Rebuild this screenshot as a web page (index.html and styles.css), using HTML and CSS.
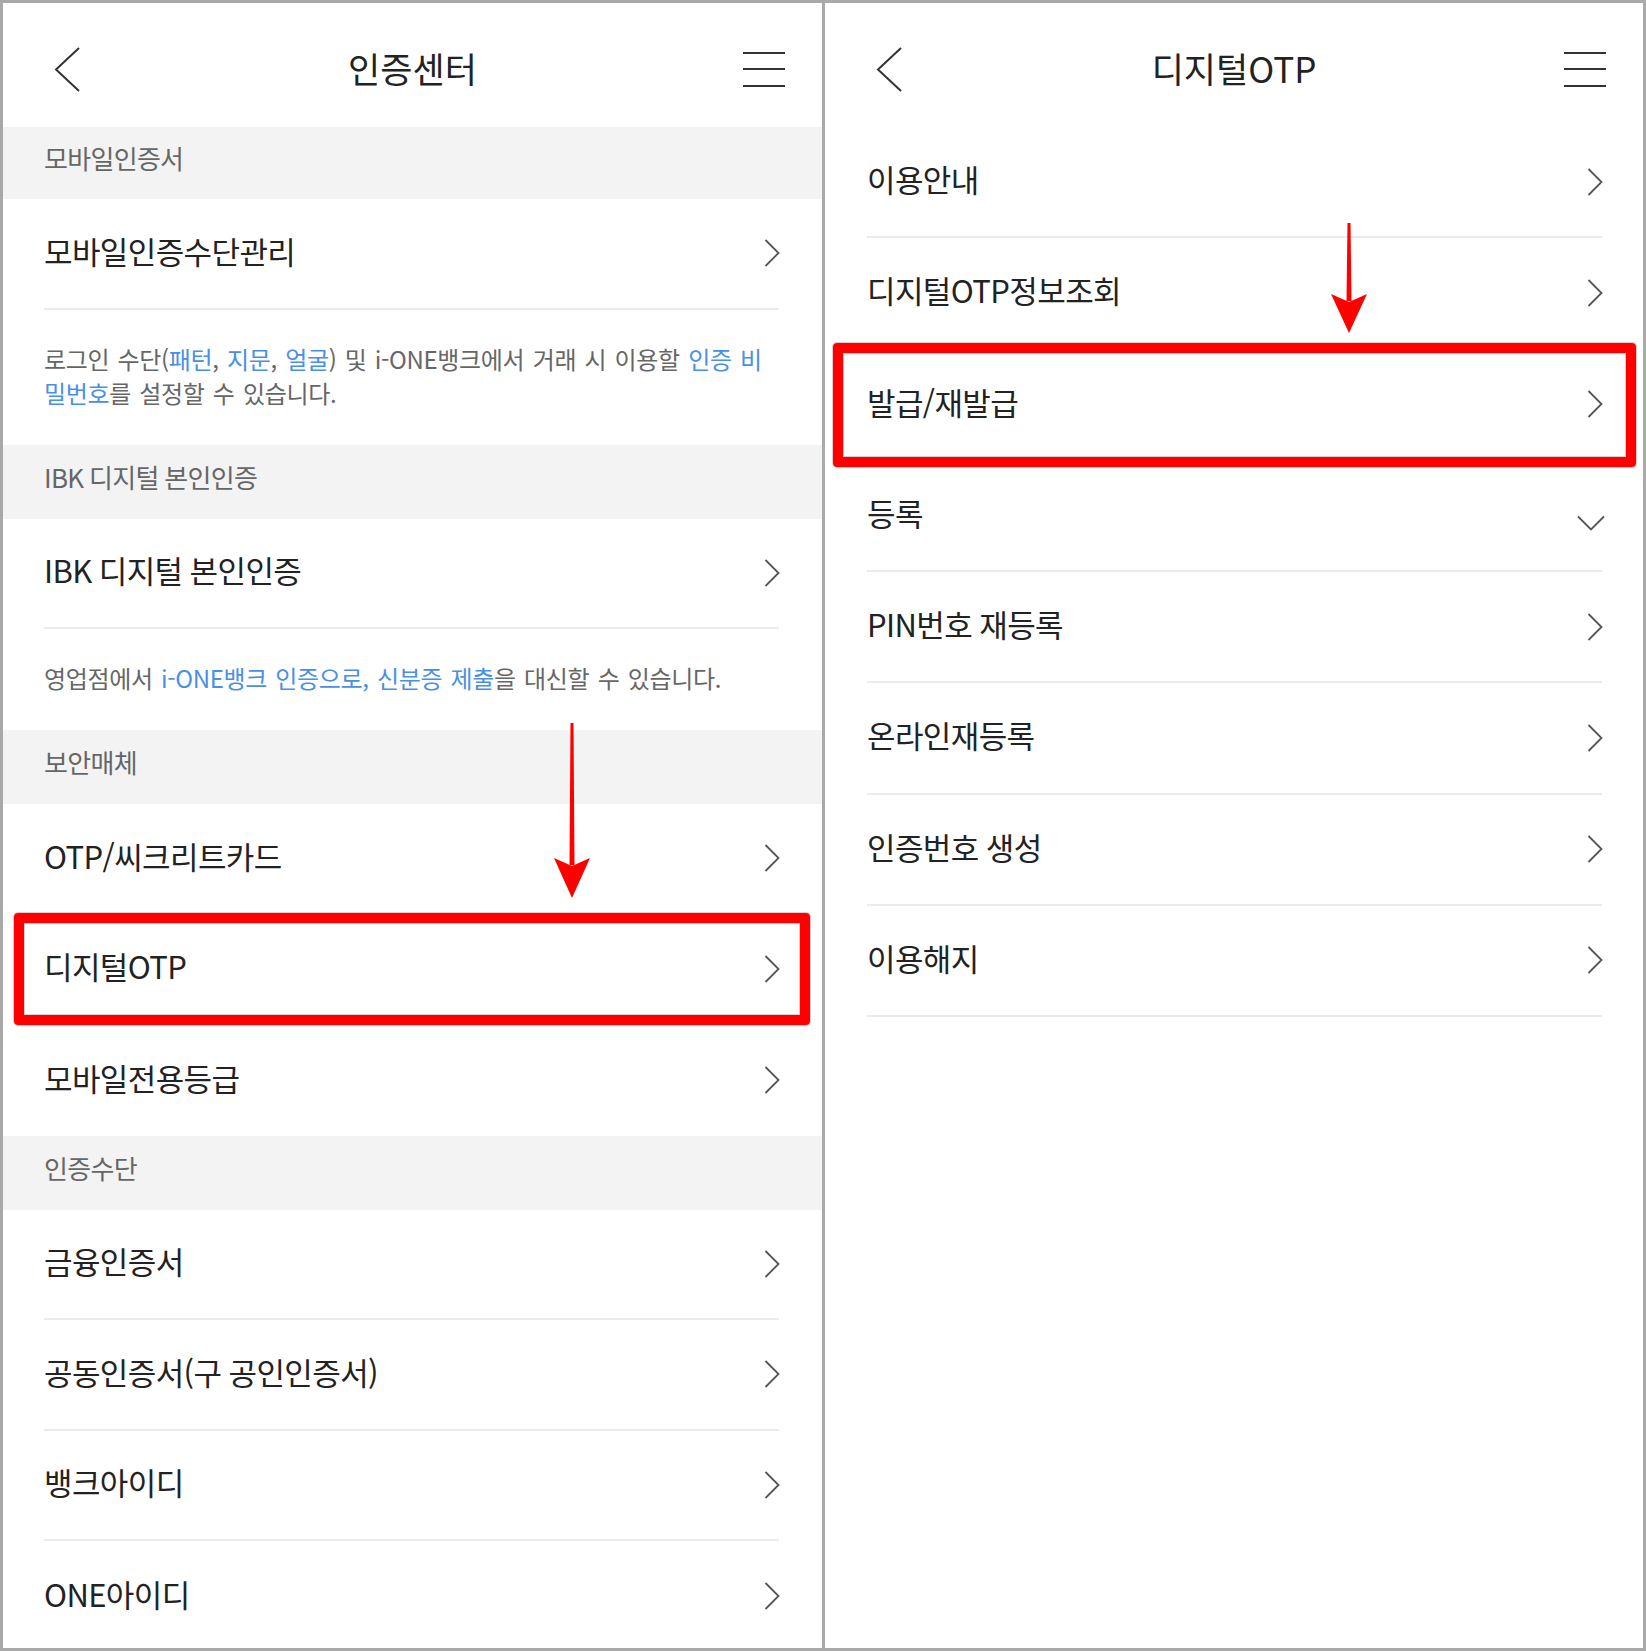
FILE: index.html
```html
<!DOCTYPE html>
<html lang="ko">
<head>
<meta charset="utf-8">
<title>인증센터 / 디지털OTP</title>
<link rel="stylesheet" href="styles.css">
</head>
<body>
<div class="page">
  <section class="panel panel-left">
    <header class="topbar">
      <svg class="back" width="27" height="45" viewBox="0 0 27 45"><polyline points="25,1 2,22.5 25,44" fill="none" stroke="#333" stroke-width="2"/></svg>
      <h1 class="title">인증센터</h1>
      <span class="burger"><i></i><i></i><i></i></span>
    </header>

    <div class="band band-first">모바일인증서</div>
    <div class="row"><span class="label">모바일인증수단관리</span><svg class="chev" width="16" height="28" viewBox="0 0 16 28"><polyline points="1.5,1 14.5,14 1.5,27" fill="none" stroke="#555" stroke-width="1.8"/></svg></div>
    <p class="desc">로그인 수단(<span class="link">패턴</span>, <span class="link">지문</span>, <span class="link">얼굴</span>) 및 i-ONE뱅크에서 거래 시 이용할 <span class="link">인증 비<br>밀번호</span>를 설정할 수 있습니다.</p>

    <div class="band">IBK 디지털 본인인증</div>
    <div class="row"><span class="label">IBK 디지털 본인인증</span><svg class="chev" width="16" height="28" viewBox="0 0 16 28"><polyline points="1.5,1 14.5,14 1.5,27" fill="none" stroke="#555" stroke-width="1.8"/></svg></div>
    <p class="desc">영업점에서 <span class="link">i-ONE뱅크 인증으로, 신분증 제출</span>을 대신할 수 있습니다.</p>

    <div class="band">보안매체</div>
    <div class="row"><span class="label">OTP/씨크리트카드</span><svg class="chev" width="16" height="28" viewBox="0 0 16 28"><polyline points="1.5,1 14.5,14 1.5,27" fill="none" stroke="#555" stroke-width="1.8"/></svg></div>
    <div class="row"><span class="label">디지털OTP</span><svg class="chev" width="16" height="28" viewBox="0 0 16 28"><polyline points="1.5,1 14.5,14 1.5,27" fill="none" stroke="#555" stroke-width="1.8"/></svg></div>
    <div class="row row-last"><span class="label">모바일전용등급</span><svg class="chev" width="16" height="28" viewBox="0 0 16 28"><polyline points="1.5,1 14.5,14 1.5,27" fill="none" stroke="#555" stroke-width="1.8"/></svg></div>

    <div class="band">인증수단</div>
    <div class="row"><span class="label">금융인증서</span><svg class="chev" width="16" height="28" viewBox="0 0 16 28"><polyline points="1.5,1 14.5,14 1.5,27" fill="none" stroke="#555" stroke-width="1.8"/></svg></div>
    <div class="row"><span class="label">공동인증서(구 공인인증서)</span><svg class="chev" width="16" height="28" viewBox="0 0 16 28"><polyline points="1.5,1 14.5,14 1.5,27" fill="none" stroke="#555" stroke-width="1.8"/></svg></div>
    <div class="row"><span class="label">뱅크아이디</span><svg class="chev" width="16" height="28" viewBox="0 0 16 28"><polyline points="1.5,1 14.5,14 1.5,27" fill="none" stroke="#555" stroke-width="1.8"/></svg></div>
    <div class="row row-last"><span class="label">ONE아이디</span><svg class="chev" width="16" height="28" viewBox="0 0 16 28"><polyline points="1.5,1 14.5,14 1.5,27" fill="none" stroke="#555" stroke-width="1.8"/></svg></div>
  </section>

  <div class="split"></div>

  <section class="panel panel-right">
    <header class="topbar">
      <svg class="back" width="27" height="45" viewBox="0 0 27 45"><polyline points="25,1 2,22.5 25,44" fill="none" stroke="#333" stroke-width="2"/></svg>
      <h1 class="title">디지털OTP</h1>
      <span class="burger"><i></i><i></i><i></i></span>
    </header>
    <div class="row"><span class="label">이용안내</span><svg class="chev" width="16" height="28" viewBox="0 0 16 28"><polyline points="1.5,1 14.5,14 1.5,27" fill="none" stroke="#555" stroke-width="1.8"/></svg></div>
    <div class="row"><span class="label">디지털OTP정보조회</span><svg class="chev" width="16" height="28" viewBox="0 0 16 28"><polyline points="1.5,1 14.5,14 1.5,27" fill="none" stroke="#555" stroke-width="1.8"/></svg></div>
    <div class="row"><span class="label">발급/재발급</span><svg class="chev" width="16" height="28" viewBox="0 0 16 28"><polyline points="1.5,1 14.5,14 1.5,27" fill="none" stroke="#555" stroke-width="1.8"/></svg></div>
    <div class="row"><span class="label">등록</span><svg class="chev-down" width="28" height="16" viewBox="0 0 28 16"><polyline points="1,1.5 14,14.5 27,1.5" fill="none" stroke="#555" stroke-width="1.8"/></svg></div>
    <div class="row"><span class="label">PIN번호 재등록</span><svg class="chev" width="16" height="28" viewBox="0 0 16 28"><polyline points="1.5,1 14.5,14 1.5,27" fill="none" stroke="#555" stroke-width="1.8"/></svg></div>
    <div class="row"><span class="label">온라인재등록</span><svg class="chev" width="16" height="28" viewBox="0 0 16 28"><polyline points="1.5,1 14.5,14 1.5,27" fill="none" stroke="#555" stroke-width="1.8"/></svg></div>
    <div class="row"><span class="label">인증번호 생성</span><svg class="chev" width="16" height="28" viewBox="0 0 16 28"><polyline points="1.5,1 14.5,14 1.5,27" fill="none" stroke="#555" stroke-width="1.8"/></svg></div>
    <div class="row"><span class="label">이용해지</span><svg class="chev" width="16" height="28" viewBox="0 0 16 28"><polyline points="1.5,1 14.5,14 1.5,27" fill="none" stroke="#555" stroke-width="1.8"/></svg></div>
  </section>

  <div class="mark mark-left"></div>
  <div class="mark mark-right"></div>

  <svg class="arrow arrow-left" width="36" height="176" viewBox="0 0 36 176">
    <polygon points="16.5,0 19.5,0 20.5,142 15.5,142" fill="#ff0000"/>
    <polygon points="0,135 18,143 36,135 18,175" fill="#ff0000"/>
  </svg>
  <svg class="arrow arrow-right" width="36" height="111" viewBox="0 0 36 111">
    <polygon points="16.5,0 19.5,0 20.5,78 15.5,78" fill="#ff0000"/>
    <polygon points="0,71 18,79 36,71 18,110" fill="#ff0000"/>
  </svg>
</div>
</body>
</html>
```

FILE: styles.css
```css
* { box-sizing: border-box; }

html, body {
  margin: 0;
  padding: 0;
  background: #ffffff;
}

body {
  font-family: "Noto Sans CJK KR", "Noto Sans", sans-serif;
  color: #222222;
}

.page {
  position: relative;
  width: 1646px;
  height: 1651px;
  border: 3px solid #a9a9a9;
  display: flex;
  overflow: hidden;
  background: #ffffff;
}

.panel {
  display: flex;
  flex-direction: column;
  overflow: hidden;
}

.panel-left { width: 819px; flex: none; }
.panel-right { width: 818px; flex: none; }

.split {
  width: 3px;
  flex: none;
  background: #a9a9a9;
}

.topbar {
  height: 124px;
  flex: none;
  display: grid;
  grid-template-columns: 1fr auto 1fr;
  align-items: center;
  padding: 8px 37px 0 37px;
}

.back {
  justify-self: start;
  margin-left: 14px;
  display: block;
}

.title {
  margin: 0 0 4px 0;
  font-size: 35px;
  font-weight: 400;
  letter-spacing: 0;
  color: #222222;
  line-height: 1;
}

.burger {
  justify-self: end;
  width: 42px;
  display: flex;
  flex-direction: column;
  gap: 14.5px;
}

.burger i {
  display: block;
  height: 2px;
  background: #333333;
}

.band {
  height: 74px;
  flex: none;
  background: #f3f3f3;
  display: flex;
  align-items: center;
  padding: 0 0 11px 41px;
  font-size: 26px;
  letter-spacing: -0.7px;
  word-spacing: -1px;
  color: #666666;
}

.band-first { height: 72px; }

.row {
  flex: none;
  display: flex;
  align-items: center;
  justify-content: space-between;
  border-bottom: 2px solid #ebebeb;
}

.panel-left .row {
  height: 110.5px;
  margin: 0 43px 0 41px;
}

.panel-right .row {
  height: 111.25px;
  margin: 0 41px 0 42px;
}

.row-last { border-bottom: none; }

.label {
  margin-bottom: 6px;
  font-size: 31px;
  letter-spacing: -0.6px;
  word-spacing: -1px;
  color: #222222;
  line-height: 1;
  white-space: nowrap;
}

.chev { display: block; margin-right: -1px; }

.chev-down {
  display: block;
  margin-top: 15px;
  margin-right: -3px;
}

.desc {
  margin: 0 43px 0 41px;
  padding: 32px 0 35px 0;
  font-size: 24px;
  line-height: 34px;
  letter-spacing: -0.35px;
  word-spacing: 2px;
  color: #666666;
  white-space: nowrap;
}

.link { color: #4a8fe6; }

.mark {
  position: absolute;
  border: 10px solid #ff0000;
  border-radius: 4px;
  box-shadow: inset 0 0 0 1px rgba(150, 150, 150, 0.45), 0 0 0 1px rgba(160, 40, 40, 0.25);
}

.mark-left {
  left: 11px;
  top: 910px;
  width: 796px;
  height: 112px;
}

.mark-right {
  left: 830px;
  top: 340px;
  width: 803px;
  height: 124px;
}

.arrow {
  position: absolute;
  display: block;
}

.arrow-left {
  left: 551px;
  top: 720px;
}

.arrow-right {
  left: 1328px;
  top: 220px;
}
```
